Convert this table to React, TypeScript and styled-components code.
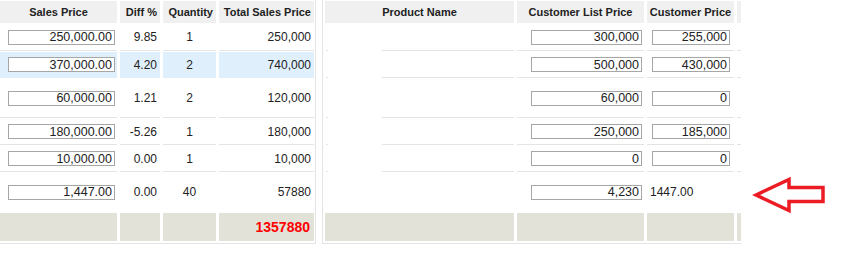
import React from "react";
import styled, { createGlobalStyle, css } from "styled-components";

const GlobalStyle = createGlobalStyle`
  html, body { margin: 0; padding: 0; background: #fff; }
  body { font-family: "Liberation Sans", Arial, sans-serif; color: #222; }
  * { box-sizing: border-box; }
`;

const LINE = "#e4e4e4";
const HEAD_BG = "#f0f0f0";
const TOTAL_BG = "#e2e2d9";
const SELECT_BG = "#dfeffc";

type Row = {
  h: number;
  sales: string;
  diff: string;
  qty: string;
  total: string;
  list: string;
  cust: string;
  selected?: boolean;
  last?: boolean;
  plainCust?: boolean;
};

const rows: Row[] = [
  { h: 27, sales: "250,000.00", diff: "9.85", qty: "1", total: "250,000", list: "300,000", cust: "255,000" },
  { h: 26, sales: "370,000.00", diff: "4.20", qty: "2", total: "740,000", list: "500,000", cust: "430,000", selected: true },
  { h: 39, sales: "60,000.00", diff: "1.21", qty: "2", total: "120,000", list: "60,000", cust: "0" },
  { h: 26, sales: "180,000.00", diff: "-5.26", qty: "1", total: "180,000", list: "250,000", cust: "185,000" },
  { h: 26, sales: "10,000.00", diff: "0.00", qty: "1", total: "10,000", list: "0", cust: "0" },
  { h: 39, sales: "1,447.00", diff: "0.00", qty: "40", total: "57880", list: "4,230", cust: "1447.00", last: true, plainCust: true },
];

const Page = styled.div`
  display: flex;
  align-items: flex-start;
  width: 843px;
  height: 259px;
  overflow: hidden;
`;

const LeftPanel = styled.div`
  display: flex;
  flex-direction: column;
  gap: 1px;
  width: 316px;
  padding: 1px 0 2px;
  border-right: 1px solid ${LINE};
  border-bottom: 1px solid ${LINE};
`;

const RightPanel = styled.div`
  display: flex;
  flex-direction: column;
  gap: 1px;
  width: 419px;
  margin-left: 6px;
  padding: 1px 0 2px 2px;
  border-left: 1px solid ${LINE};
  border-bottom: 1px solid ${LINE};
  overflow: hidden;
`;

const GridRow = styled.div<{ $cols: string }>`
  display: grid;
  grid-template-columns: ${(p) => p.$cols};
  column-gap: 3px;
`;

const LEFT_COLS = "117px 40px 53px 95px";
const RIGHT_COLS = "189px 127px 87px 60px";

const HeadCell = styled.div<{ $align?: string }>`
  height: 22px;
  background: ${HEAD_BG};
  font-size: 11px;
  font-weight: bold;
  color: #222;
  display: flex;
  align-items: center;
  justify-content: ${(p) => p.$align || "center"};
  padding: 0 3px;
  white-space: nowrap;
  overflow: hidden;
`;

const Cell = styled.div<{ $h: number; $align?: string; $sel?: boolean; $last?: boolean }>`
  height: ${(p) => p.$h}px;
  display: flex;
  align-items: center;
  justify-content: ${(p) => p.$align || "flex-end"};
  padding: 0 3px;
  font-size: 12px;
  color: #222;
  white-space: nowrap;
  background: ${(p) => (p.$sel ? SELECT_BG : "#fff")};
  border-bottom: 1px solid ${(p) => (p.$last ? "#fff" : p.$sel ? SELECT_BG : LINE)};
`;

/* product name column: rule broken after a small left tick */
const NameCell = styled.div<{ $h: number; $last?: boolean }>`
  height: ${(p) => p.$h}px;
  ${(p) =>
    !p.$last &&
    css`
      background:
        linear-gradient(${LINE}, ${LINE}) 1px 100% / 2px 1px no-repeat,
        linear-gradient(${LINE}, ${LINE}) 57px 100% / calc(100% - 57px) 1px no-repeat;
    `}
`;

const NumInput = styled.input<{ $w: number; $mr: number }>`
  width: ${(p) => p.$w}px;
  height: 15px;
  margin: 0 ${(p) => p.$mr}px 0 0;
  padding: 0 2px 0 2px;
  border: 1px solid #a6a6a6;
  border-radius: 0;
  background: #fff;
  font-family: "Liberation Sans", Arial, sans-serif;
  font-size: 12.5px;
  color: #222;
  text-align: right;
  outline: none;
`;

const InputCell = styled(Cell)`
  padding: 0;
`;

const TotalCell = styled.div<{ $strong?: boolean }>`
  height: 28px;
  background: ${TOTAL_BG};
  display: flex;
  align-items: center;
  justify-content: flex-end;
  padding: 0 4px;
  font-size: 14px;
  font-weight: bold;
  color: #ff0000;
`;

const ArrowMark = styled.svg`
  flex: none;
  margin: 176px 0 0 11px;
`;

export default function App() {
  return (
    <>
      <GlobalStyle />
      <Page>
        <LeftPanel>
          <GridRow $cols={LEFT_COLS}>
            <HeadCell>Sales Price</HeadCell>
            <HeadCell $align="flex-end">Diff %</HeadCell>
            <HeadCell $align="flex-end">Quantity</HeadCell>
            <HeadCell $align="flex-end">Total Sales Price</HeadCell>
          </GridRow>
          {rows.map((r, i) => (
            <GridRow key={i} $cols={LEFT_COLS}>
              <InputCell $h={r.h} $sel={r.selected} $last={r.last}>
                <NumInput $w={107} $mr={2} defaultValue={r.sales} />
              </InputCell>
              <Cell $h={r.h} $sel={r.selected} $last={r.last}>{r.diff}</Cell>
              <Cell $h={r.h} $sel={r.selected} $last={r.last} $align="center">{r.qty}</Cell>
              <Cell $h={r.h} $sel={r.selected} $last={r.last}>{r.total}</Cell>
            </GridRow>
          ))}
          <GridRow $cols={LEFT_COLS}>
            <TotalCell />
            <TotalCell />
            <TotalCell />
            <TotalCell>1357880</TotalCell>
          </GridRow>
        </LeftPanel>

        <RightPanel>
          <GridRow $cols={RIGHT_COLS}>
            <HeadCell>Product Name</HeadCell>
            <HeadCell>Customer List Price</HeadCell>
            <HeadCell>Customer Price</HeadCell>
            <HeadCell />
          </GridRow>
          {rows.map((r, i) => (
            <GridRow key={i} $cols={RIGHT_COLS}>
              <NameCell $h={r.h} $last={r.last} />
              <InputCell $h={r.h} $last={r.last}>
                <NumInput $w={111} $mr={2} defaultValue={r.list} />
              </InputCell>
              {r.plainCust ? (
                <Cell $h={r.h} $last={r.last} $align="flex-start">{r.cust}</Cell>
              ) : (
                <InputCell $h={r.h} $last={r.last}>
                  <NumInput $w={78} $mr={4} defaultValue={r.cust} />
                </InputCell>
              )}
              <Cell $h={r.h} $last={r.last} />
            </GridRow>
          ))}
          <GridRow $cols={RIGHT_COLS}>
            <TotalCell />
            <TotalCell />
            <TotalCell />
            <TotalCell />
          </GridRow>
        </RightPanel>

        <ArrowMark width="76" height="38" viewBox="0 0 76 38">
          <polygon
            points="4,19 37,3.5 37,11.5 71,11.5 71,25.5 37,25.5 37,34.5"
            fill="none"
            stroke="#ec1c24"
            strokeWidth="3.5"
            strokeLinejoin="miter"
          />
        </ArrowMark>
      </Page>
    </>
  );
}
